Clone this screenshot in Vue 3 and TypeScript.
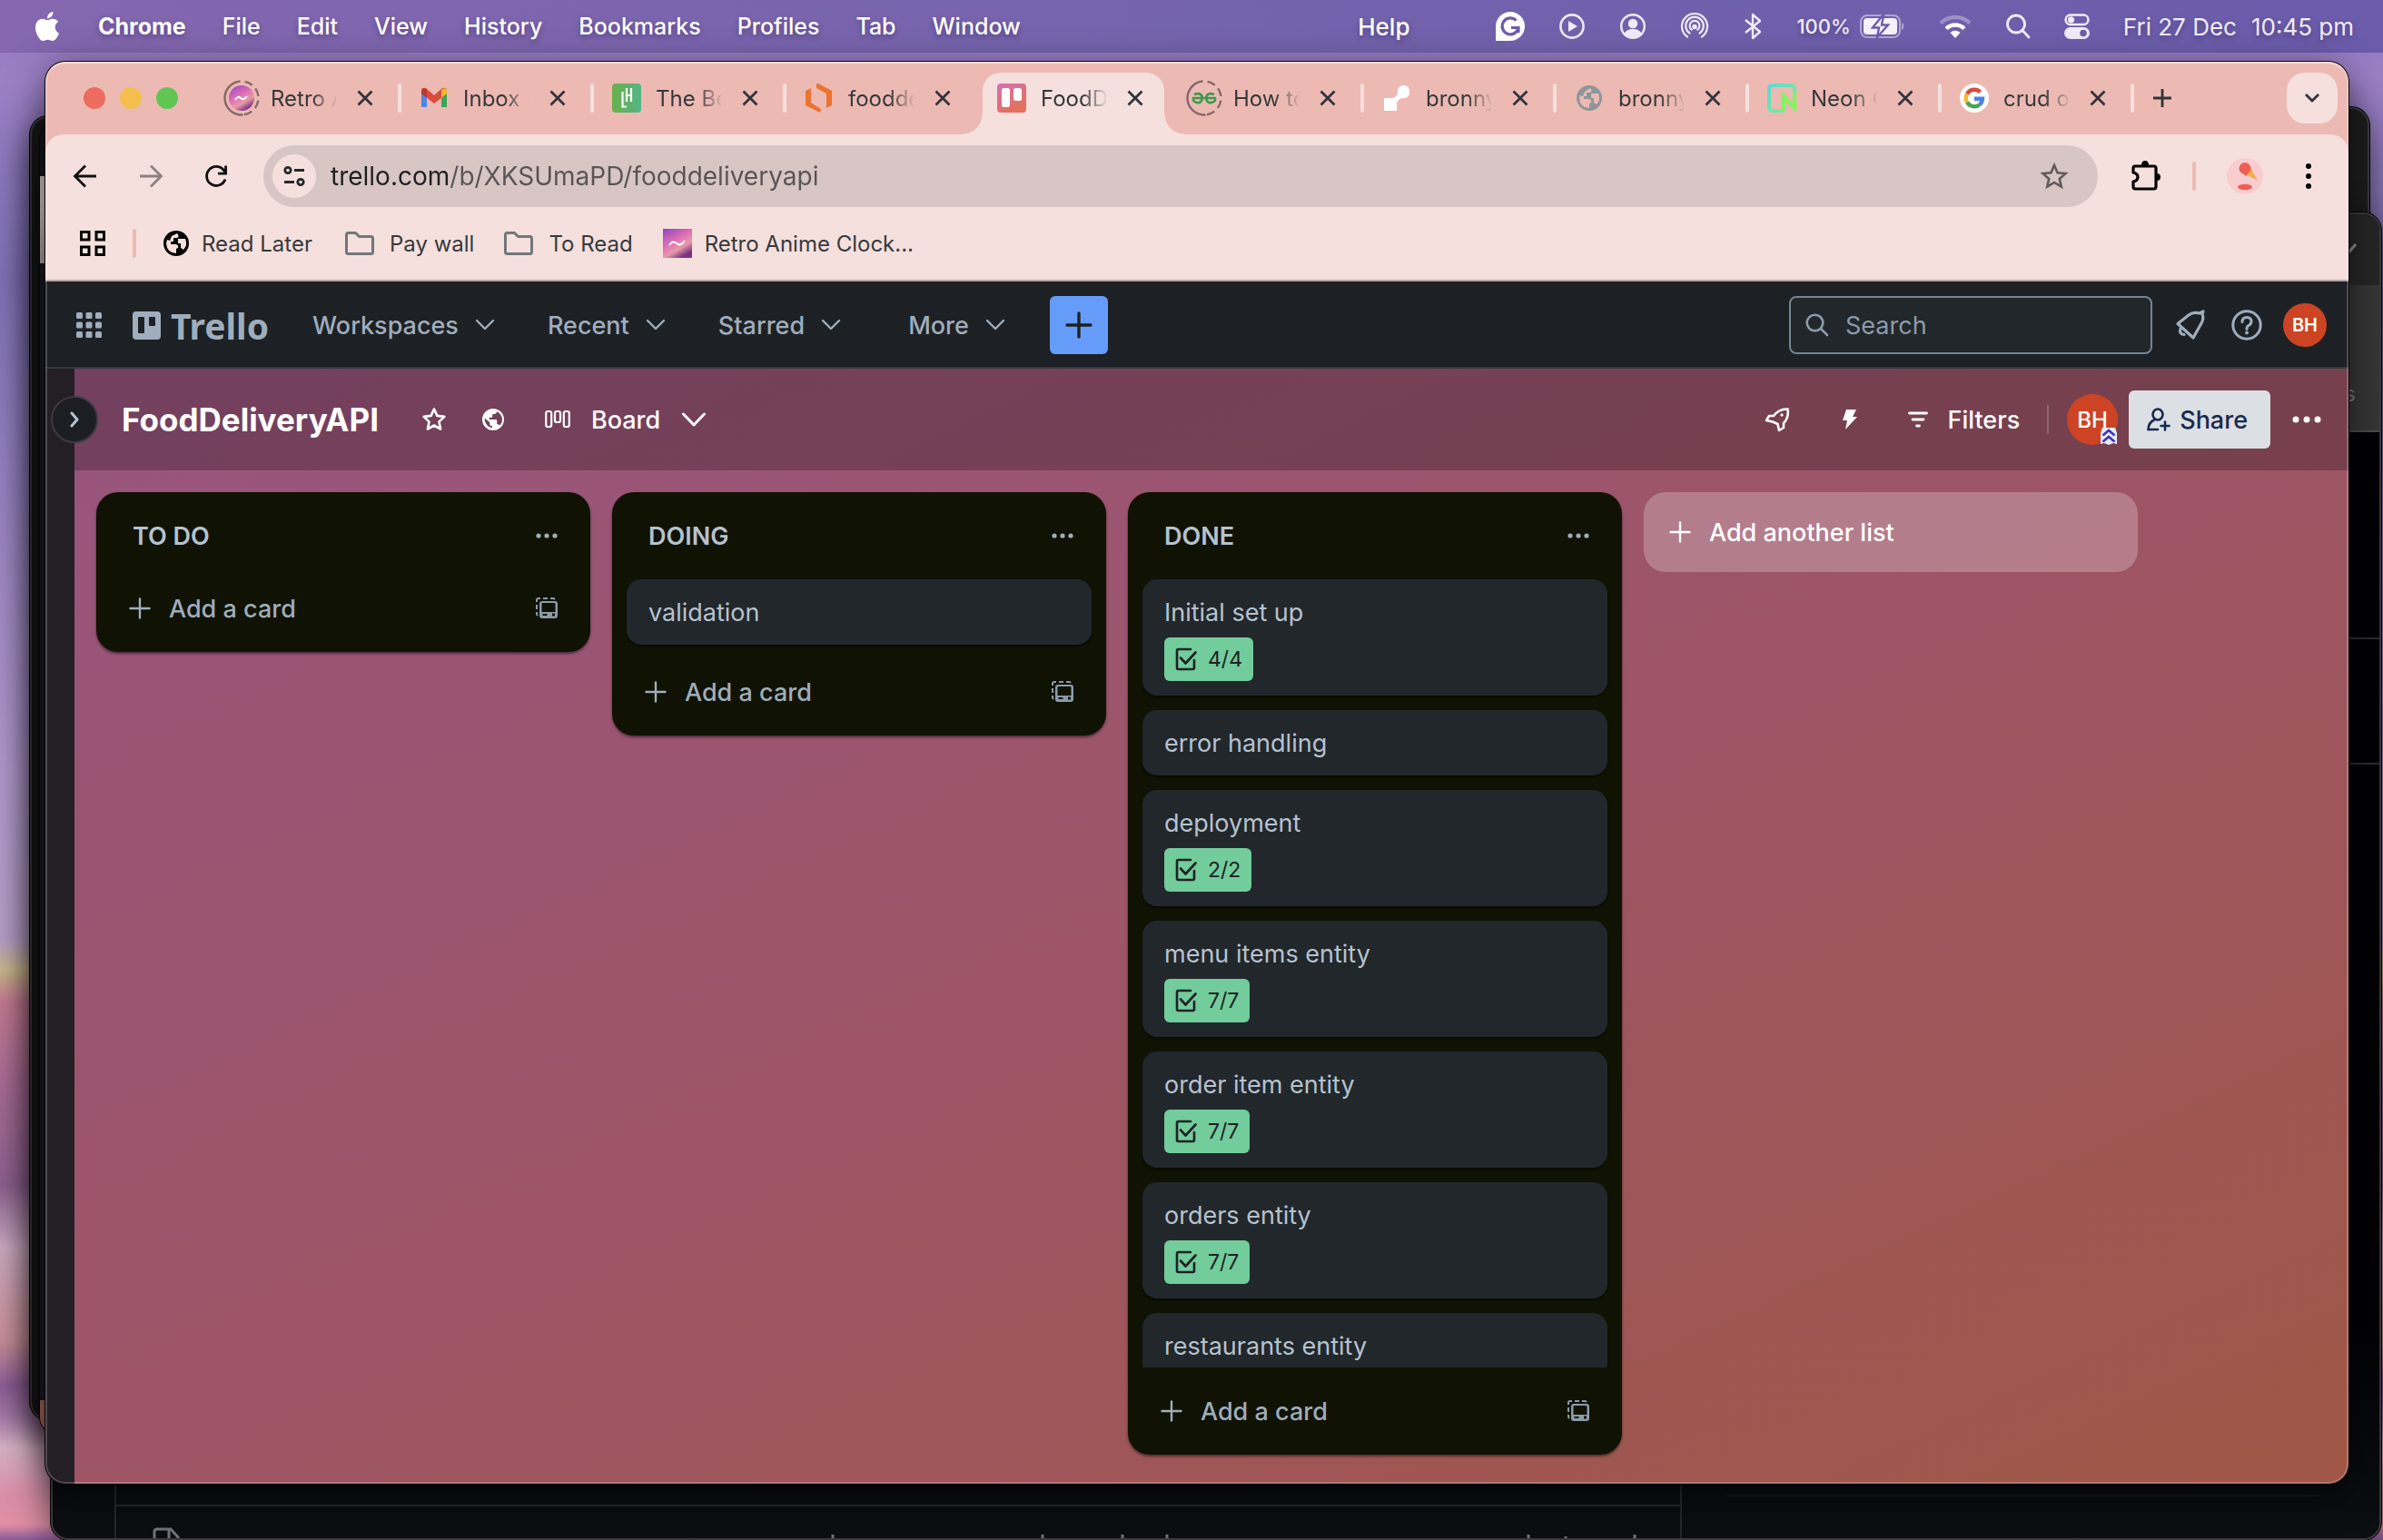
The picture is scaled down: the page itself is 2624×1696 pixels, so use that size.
<script setup lang="ts">
interface BrowserTab {
  title: string
  icon: string
  active?: boolean
  separator: boolean
}
interface Card {
  title: string
  checks?: string
}
interface List {
  name: string
  cards: Card[]
}

const menus: string[] = ['File', 'Edit', 'View', 'History', 'Bookmarks', 'Profiles', 'Tab', 'Window']

const tabs: BrowserTab[] = [
  { title: 'Retro A', icon: 'retro', separator: true },
  { title: 'Inbox (', icon: 'gmail', separator: true },
  { title: 'The Be', icon: 'lh', separator: true },
  { title: 'foodde', icon: 'hex', separator: false },
  { title: 'FoodD', icon: 'trello', active: true, separator: false },
  { title: 'How to', icon: 'geeks', separator: true },
  { title: 'bronny', icon: 'render', separator: true },
  { title: 'bronny', icon: 'globe', separator: true },
  { title: 'Neon C', icon: 'neon', separator: true },
  { title: 'crud o', icon: 'google', separator: true },
]

const navItems: string[] = ['Workspaces', 'Recent', 'Starred', 'More']

const lists: List[] = [
  { name: 'TO DO', cards: [] },
  { name: 'DOING', cards: [{ title: 'validation' }] },
  {
    name: 'DONE',
    cards: [
      { title: 'Initial set up', checks: '4/4' },
      { title: 'error handling' },
      { title: 'deployment', checks: '2/2' },
      { title: 'menu items entity', checks: '7/7' },
      { title: 'order item entity', checks: '7/7' },
      { title: 'orders entity', checks: '7/7' },
      { title: 'restaurants entity' },
    ],
  },
]
</script>

<template>
  <div class="desktop">
    <header class="menubar">
      <nav class="menus">
        <svg class="apple" viewBox="0 0 24 24" fill="#fff" aria-hidden="true">
          <path d="M12.152 6.896c-.948 0-2.415-1.078-3.96-1.04-2.04.027-3.91 1.183-4.961 3.014-2.117 3.675-.546 9.103 1.519 12.09 1.013 1.454 2.208 3.09 3.792 3.039 1.52-.065 2.09-.987 3.935-.987 1.831 0 2.35.987 3.96.948 1.637-.026 2.676-1.48 3.676-2.948 1.156-1.688 1.636-3.325 1.662-3.415-.039-.013-3.182-1.221-3.22-4.857-.026-3.04 2.48-4.494 2.597-4.559-1.429-2.09-3.623-2.324-4.39-2.376-2-.156-3.675 1.09-4.61 1.09zM15.53 3.83c.843-1.012 1.4-2.427 1.245-3.83-1.207.052-2.662.805-3.532 1.818-.78.896-1.454 2.338-1.273 3.714 1.338.104 2.715-.688 3.559-1.701" />
        </svg>
        <strong>Chrome</strong>
        <span v-for="m in menus" :key="m">{{ m }}</span>
      </nav>
      <div class="status">
        <span class="help">Help</span>
        <svg width="32" height="32" viewBox="0 0 32 32">
          <path fill="#fff" d="M16 0a16 16 0 1 1 0 32H0V16A16 16 0 0 1 16 0z" />
          <path fill="none" stroke="#6c5ca8" stroke-width="3.200" d="M22.500 9.500A9 9 0 1 0 25 17.500H17M25 17.500V23" />
        </svg>
        <svg width="30" height="30" viewBox="0 0 30 30">
          <circle cx="15" cy="15" r="12.600" fill="none" stroke="#efebf8" stroke-width="2.600" />
          <path fill="#efebf8" d="M11 9v12l10-6z" />
        </svg>
        <svg width="30" height="30" viewBox="0 0 30 30">
          <circle cx="15" cy="15" r="12.800" fill="none" stroke="#efebf8" stroke-width="2.400" />
          <circle cx="15" cy="12" r="5.200" fill="#efebf8" />
          <path fill="#efebf8" d="M5 24c2-5 6-6 10-6s8 1 10 6c-3 3-6 4.400-10 4.400S8 27 5 24z" />
        </svg>
        <svg width="32" height="32" viewBox="0 0 32 32" fill="none" stroke="#efebf8" stroke-width="2.200" stroke-linecap="round">
          <path d="M8 27.500A14 14 0 1 1 24 27.500M10.500 23.500a9.800 9.800 0 1 1 11 0M12.800 19.600a5.400 5.400 0 1 1 6.400 0" />
          <circle cx="16" cy="16.500" r="1.600" fill="#efebf8" />
        </svg>
        <svg width="22" height="32" viewBox="0 0 22 32" fill="none" stroke="#efebf8" stroke-width="2.400" stroke-linejoin="round">
          <path d="M3 9l16 13-8 7V3l8 7L3 23" />
        </svg>
        <span class="battery">
          100%
          <svg width="50" height="26" viewBox="0 0 50 26">
            <rect x="1" y="1" width="43" height="24" rx="7" fill="none" stroke="#b0a6d3" stroke-width="2" />
            <rect x="4" y="4" width="37" height="18" rx="4" fill="#f4f1fb" />
            <path d="M46 9c3 1 3 7 0 8z" fill="#b0a6d3" />
            <path d="M25 1L14 14.500h7L19 25l12-13.500h-7L26 1z" fill="#f4f1fb" stroke="#6c5dab" stroke-width="2.400" />
          </svg>
        </span>
        <svg width="36" height="26" viewBox="0 0 36 26" fill="none" stroke-width="4.400">
          <path d="M2 9.500a23 23 0 0 1 32 0" stroke="#9b8fc7" />
          <path d="M8 15.500a14.500 14.500 0 0 1 20 0" stroke="#fff" />
          <path d="M18 26l-5.500-6a8 8 0 0 1 11 0z" fill="#fff" />
        </svg>
        <svg width="28" height="28" viewBox="0 0 28 28" fill="none" stroke="#efebf8" stroke-width="2.800" stroke-linecap="round">
          <circle cx="12" cy="11.500" r="9.500" />
          <path d="M19 18.500l7 7.500" />
        </svg>
        <svg width="28" height="28" viewBox="0 0 28 28">
          <rect x="1.500" y="1.500" width="25" height="10.500" rx="5.200" fill="none" stroke="#efebf8" stroke-width="2.400" />
          <circle cx="7.500" cy="6.800" r="3.600" fill="#efebf8" />
          <rect x="0" y="15" width="28" height="13" rx="6.500" fill="#efebf8" />
          <circle cx="21" cy="21.500" r="3.800" fill="#6c5dab" />
        </svg>
        <time class="clock"><span>Fri 27 Dec</span><span>10:45 pm</span></time>
      </div>
    </header>

    <div class="back-windows" aria-hidden="true">
      <div class="bw bw-grey"></div>
      <div class="bw bw-board"></div>
      <div class="bw bw-top"></div>
      <div class="bw bw-main">
        <div class="bw-tabs"><svg width="12" height="18" viewBox="0 0 12 18" fill="none" stroke="#8f8f8f" stroke-width="3"><path d="M0 12l8-9" /></svg></div>
        <div class="bw-bar">s</div>
        <div class="bw-page">
          <div class="bw-doc">
            <svg width="1684" height="12" viewBox="0 0 1684 12" fill="none" stroke="#6e7278" stroke-width="3"><path d="M2 14V5q0-3 3-3h15l9 10M18 2v12" /><path d="M749 8v6M980 8v6M1068 8v6M1117 8v6M1515 8v6M1556 10v4M1632 8v6" /></svg>
          </div>
          <div class="bw-side"></div>
        </div>
      </div>
    </div>

    <main class="window">
      <div class="chrome">
        <div class="tabstrip">
          <div class="lights"><i class="red"></i><i class="yellow"></i><i class="green"></i></div>
          <div class="tabs">
            <div v-for="(t, i) in tabs" :key="i" class="tab" :class="{ active: t.active, sep: t.separator }">
              <span v-if="t.active" class="tab-shape"></span>
              <svg class="favicon" viewBox="0 0 32 32">
                <template v-if="t.icon === 'retro'">
                  <circle cx="16" cy="16" r="18.500" fill="none" stroke="#85686b" stroke-width="2.400" stroke-dasharray="58 5 9 5 9 5 9 5 9 3" transform="rotate(85 16 16)" />
                  <circle cx="16" cy="16" r="14" fill="url(#retro)" />
                  <path d="M9 18q3-5 6-2t7-2" fill="none" stroke="#fff" stroke-width="2" />
                </template>
                <template v-else-if="t.icon === 'gmail'">
                  <path d="M2 8v18h6V13z" fill="#4c86ee" /><path d="M24 13v13h6V8z" fill="#3ba65a" />
                  <path d="M2 8q0-4 5-3l9 8 9-8q5-1 5 3v3L16 22 2 11z" fill="#dc4a3c" />
                  <path d="M24 7q5-4 6 1v3l-6 5z" fill="#f3b92b" /><path d="M2 8q1-5 6-1v9l-6-5z" fill="#b93a2e" />
                </template>
                <template v-else-if="t.icon === 'lh'">
                  <rect width="32" height="32" rx="4" fill="url(#lh)" />
                  <path d="M11.500 9v16.500H16M16 5v15M21 5v15M16 13h5" fill="none" stroke="#fff" stroke-width="2.200" />
                </template>
                <template v-else-if="t.icon === 'hex'">
                  <path d="M1 8l6-3v16l11 7-1 4L1 24zM13 0l2 0 15 8v16l-6 3V11l-11-6z" fill="#ec722e" />
                </template>
                <template v-else-if="t.icon === 'trello'">
                  <rect width="32" height="32" rx="4" fill="url(#trelloFav)" />
                  <rect x="5" y="5" width="9" height="21" rx="2.500" fill="#fff" /><rect x="18" y="5" width="9" height="14" rx="2.500" fill="#fff" />
                </template>
                <template v-else-if="t.icon === 'geeks'">
                  <circle cx="16" cy="16" r="18.500" fill="none" stroke="#85686b" stroke-width="2.400" stroke-dasharray="58 5 9 5 9 5 9 5 9 3" transform="rotate(85 16 16)" />
                  <path d="M5 12q8-3 9 4-1 6-6 5t-4-5h24q1 4-4 5t-6-5q1-7 9-4" fill="none" stroke="#3f9a4d" stroke-width="2.600" />
                </template>
                <template v-else-if="t.icon === 'render'">
                  <path d="M2 16h8q7 0 7-7t7-7q6 0 6 7t-6 7q-8 0-8 8v6H2z" fill="#fff" />
                </template>
                <template v-else-if="t.icon === 'globe'">
                  <circle cx="16" cy="16" r="14" fill="#8d979b" />
                  <path d="M17 5q3 3 0 5h-4v4h-3v3h6q3 1 2 4l-2 1v5Q6 27 5 16l1-3 3 1 2-5zM26 11q3 7-2 12l-3-2v-5h-3v-5z" fill="#edbab3" />
                </template>
                <template v-else-if="t.icon === 'neon'">
                  <path d="M18 30H6q-4 0-4-4V6q0-4 4-4h20q4 0 4 4v20" fill="none" stroke="url(#neon)" stroke-width="4" />
                  <path d="M18 30V14l12 13V10" fill="none" stroke="#84f262" stroke-width="4.500" />
                </template>
                <template v-else>
                  <circle cx="16" cy="16" r="16" fill="#fff" />
                  <g fill="none" stroke-width="4.400">
                    <path d="M22.600 9.400A9.300 9.300 0 0 0 8 11.300" stroke="#dd4b3e" /><path d="M8 11.300a9.300 9.300 0 0 0 0 9.400" stroke="#f2b92f" />
                    <path d="M8 20.700a9.300 9.300 0 0 0 14 2.400" stroke="#4aa457" /><path d="M22 23.100a9.300 9.300 0 0 0 3-6.400h-9" stroke="#4c82ea" />
                  </g>
                </template>
              </svg>
              <span class="tab-title">{{ t.title }}</span>
              <button class="icon-btn" :aria-label="'Close ' + t.title">
                <svg width="24" height="24" viewBox="0 0 24 24" fill="none" stroke="#30343a" stroke-width="2.800"><path d="M4.500 4.500l15 15M19.500 4.500l-15 15" /></svg>
              </button>
            </div>
          </div>
          <button class="icon-btn newtab" aria-label="New tab">
            <svg width="24" height="24" viewBox="0 0 24 24" fill="none" stroke="#30343a" stroke-width="2.800"><path d="M12 2v20M2 12h20" /></svg>
          </button>
          <button class="icon-btn tabsearch" aria-label="Search tabs">
            <svg width="20" height="14" viewBox="0 0 20 14" fill="none" stroke="#30343a" stroke-width="2.800"><path d="M3 3l7 7 7-7" /></svg>
          </button>
        </div>

        <div class="toolbar">
          <div class="address-row">
            <div class="nav-btns">
              <button class="icon-btn" aria-label="Back"><svg width="32" height="32" viewBox="0 0 32 32" fill="none" stroke="#111" stroke-width="2.800"><path d="M28 16H5M16 4.500L4.500 16 16 27.500" /></svg></button>
              <button class="icon-btn" aria-label="Forward"><svg width="32" height="32" viewBox="0 0 32 32" fill="none" stroke="#8d8180" stroke-width="2.800"><path d="M4 16h23M16 4.500L27.500 16 16 27.500" /></svg></button>
              <button class="icon-btn" aria-label="Reload"><svg width="32" height="32" viewBox="0 0 32 32" fill="none" stroke="#111" stroke-width="2.800"><path d="M26 19.500A10.500 10.500 0 1 1 24 9l2.500 3.500M26.600 4.500v8.700H18" /></svg></button>
            </div>
            <div class="omnibox">
              <button class="icon-btn site-info" aria-label="Site information">
                <svg width="28" height="28" viewBox="0 0 28 28" fill="none" stroke="#26292c" stroke-width="2.800"><circle cx="7" cy="7.500" r="3.200" /><path d="M14 7.500h11M3 20.500h11" /><circle cx="21" cy="20.500" r="3.200" /></svg>
              </button>
              <input class="url" type="text" value="trello.com/b/XKSUmaPD/fooddeliveryapi" aria-label="Address" />
              <button class="icon-btn" aria-label="Bookmark this page">
                <svg width="32" height="32" viewBox="0 0 32 32" fill="none" stroke="#5f5a5b" stroke-width="2.600"><path d="M16 4l3.600 8.200 8.900.8-6.700 5.900 2 8.700-7.800-4.600-7.800 4.600 2-8.700L3.500 13l8.900-.8z" /></svg>
              </button>
            </div>
            <div class="ext">
              <button class="icon-btn" aria-label="Extensions">
                <svg width="34" height="36" viewBox="0 0 34 36" fill="none" stroke="#000" stroke-width="3.200" stroke-linejoin="round"><path d="M4 7h22q2 0 2 2v20q0 3-2 3H5q-2 0-2-3v-5q5-1 5-5t-5-5V9q0-2 2-2z" /><path d="M12 6q0-5 4-5t4 5zM29 15q4 0 4 4t-4 4z" fill="#000" stroke="none" /></svg>
              </button>
              <i class="vsep"></i>
              <button class="icon-btn" aria-label="Profile">
                <svg width="40" height="40" viewBox="0 0 40 40"><circle cx="20" cy="20" r="20" fill="#f8cdd0" /><path d="M26 10l8 15-13-7z" fill="#f2ad4e" /><ellipse cx="20" cy="11.500" rx="6.500" ry="6.500" fill="#ef5f55" /><path d="M14 13l7 7 4-6z" fill="#ef5f55" /><ellipse cx="20" cy="32" rx="8" ry="3.200" fill="#ef5f55" /></svg>
              </button>
              <button class="icon-btn" aria-label="Menu"><svg width="32" height="32" viewBox="0 0 32 32"><circle cx="16" cy="5" r="3" /><circle cx="16" cy="16" r="3" /><circle cx="16" cy="27" r="3" /></svg></button>
            </div>
          </div>
          <div class="bookmarks">
            <svg class="apps" width="28" height="28" viewBox="0 0 28 28" fill="none" stroke="#000" stroke-width="3"><path d="M1.500 1.500h8.500v8.500H1.500zM18 1.500h8.500v8.500H18zM1.500 18h8.500v8.500H1.500zM18 18h8.500v8.500H18z" /></svg>
            <i class="vsep"></i>
            <a href="#" class="bookmark">
              <svg width="28" height="28" viewBox="0 0 28 28"><circle cx="14" cy="14" r="14" /><path d="M15 3q3 3 0 5h-4v4H8v3h6q3 1 2 4l-2 1v5Q4 25 3 14l1-4 3 1 2-5zM24 9q3 7-2 12l-3-2v-5h-3V9z" fill="#f5e0dd" /></svg>
              Read Later
            </a>
            <a v-for="f in ['Pay wall', 'To Read']" :key="f" href="#" class="bookmark folder">
              <svg width="32" height="26" viewBox="0 0 32 26" fill="none" stroke="#71777b" stroke-width="3" stroke-linejoin="round"><path d="M1.500 3.500q0-2 2-2h8l4 4h13q2 0 2 2v15q0 2-2 2h-25q-2 0-2-2z" /></svg>
              {{ f }}
            </a>
            <a href="#" class="bookmark">
              <svg width="32" height="32" viewBox="0 0 32 32"><rect width="32" height="32" fill="url(#retro)" /><path d="M7 18q4-6 8-2t9-3" fill="none" stroke="#fff" stroke-width="2" /></svg>
              Retro Anime Clock...
            </a>
          </div>
        </div>
      </div>

      <header class="trello-nav">
        <button class="icon-btn" aria-label="Atlassian apps">
          <svg width="28" height="28" viewBox="0 0 28 28" fill="#9fadbc"><template v-for="r in 3" :key="r"><rect v-for="c in 3" :key="c" :x="(c - 1) * 10.500" :y="(r - 1) * 10.500" width="7" height="7" rx="1.500" /></template></svg>
        </button>
        <a href="#" class="logo">
          <svg width="31" height="31" viewBox="0 0 31 31"><path fill="#9fadbc" fill-rule="evenodd" d="M4 0h23q4 0 4 4v23q0 4-4 4H4q-4 0-4-4V4q0-4 4-4zM7 6q-1 0-1 1v16q0 1 1 1h5q1 0 1-1V7q0-1-1-1zM19 6q-1 0-1 1v8q0 1 1 1h5q1 0 1-1V7q0-1-1-1z" /></svg>
          Trello
        </a>
        <nav class="trello-menus">
          <button v-for="n in navItems" :key="n" class="menu-btn">
            {{ n }}
            <svg width="22" height="14" viewBox="0 0 22 14" fill="none" stroke="#9fadbc" stroke-width="2.400" stroke-linecap="round" stroke-linejoin="round"><path d="M2 2l9 9 9-9" /></svg>
          </button>
        </nav>
        <button class="create" aria-label="Create">
          <svg width="30" height="30" viewBox="0 0 30 30" fill="none" stroke="#1d2125" stroke-width="3.400" stroke-linecap="round"><path d="M15 2v26M2 15h26" /></svg>
        </button>
        <label class="search">
          <svg width="26" height="26" viewBox="0 0 26 26" fill="none" stroke="#8c9bab" stroke-width="2.600" stroke-linecap="round"><circle cx="10.500" cy="10.500" r="8.800" /><path d="M17.500 17.500l6.500 6.500" /></svg>
          <input type="search" placeholder="Search" aria-label="Search" />
        </label>
        <button class="icon-btn" aria-label="Notifications">
          <svg width="34" height="34" viewBox="0 0 34 34" fill="none" stroke="#9fadbc" stroke-width="3.200" stroke-linejoin="round" stroke-linecap="round"><path d="M31 2l-1 3q2 5-1 10l-9 16L3 15.500 15 6q5-4 12-2z" /><path d="M6 21q-2 6 4 6.500" /></svg>
        </button>
        <button class="icon-btn" aria-label="Help">
          <svg width="34" height="34" viewBox="0 0 34 34" fill="none" stroke="#9fadbc" stroke-width="3"><circle cx="17" cy="17" r="15.200" /><path d="M12 13.500q0-5 5-5t5 4.500q0 3-3 4.500-2 1-2 4" stroke-linecap="round" /><circle cx="17" cy="25.500" r="1.200" fill="#9fadbc" stroke-width="1.400" /></svg>
        </button>
        <button class="avatar small" aria-label="Account">BH</button>
      </header>

      <div class="workspace">
        <aside class="sidebar">
          <button class="expand" aria-label="Expand sidebar">
            <svg width="12" height="18" viewBox="0 0 12 18" fill="none" stroke="#b6c2cf" stroke-width="3" stroke-linecap="round" stroke-linejoin="round"><path d="M3 2l6 7-6 7" /></svg>
          </button>
        </aside>
        <section class="board">
          <div class="board-header">
            <h1>FoodDeliveryAPI</h1>
            <button class="icon-btn star" aria-label="Star board">
              <svg width="28" height="28" viewBox="0 0 28 28" fill="none" stroke="#fff" stroke-width="2.600" stroke-linejoin="round"><path d="M14 2.500l3.400 7.400 8 1-5.900 5.500 1.600 8.100-7.100-4-7.100 4 1.600-8.100-5.900-5.500 8-1z" /></svg>
            </button>
            <button class="icon-btn world" aria-label="Visibility">
              <svg width="26" height="26" viewBox="0 0 26 26"><path fill="#fff" fill-rule="evenodd" d="M13 1a12 12 0 1 1 0 24 12 12 0 0 1 0-24zM3.800 11.500c-.6 5 3 10 8 10.800v-2.300q-2.600 0-2.600-2.600v-1.300zM17 4.300q-.3 2.700-2.700 2.700h-2v2.500q0 1.200-1.200 1.200H8.800v2.400H16q1.200 0 1.200 1.200V18q2 0 3 1.600A9.300 9.300 0 0 0 17 4.300z" /></svg>
            </button>
            <button class="menu-btn view">
              <svg width="28" height="22" viewBox="0 0 28 22" fill="none" stroke="#fff" stroke-width="2.200"><rect x="1.200" y="2" width="6" height="17" rx="2" /><rect x="11" y="2" width="6" height="12" rx="2" /><rect x="20.800" y="2" width="6" height="17" rx="2" /></svg>
              Board
              <svg width="28" height="18" viewBox="0 0 28 18" fill="none" stroke="#fff" stroke-width="3" stroke-linecap="round" stroke-linejoin="round"><path d="M2.500 3L14 15 25.500 3" /></svg>
            </button>
            <div class="board-tools">
              <button class="icon-btn" aria-label="Power-Ups">
                <svg width="28" height="28" viewBox="0 0 28 28" fill="none" stroke="#fff" stroke-width="2.600" stroke-linejoin="round"><path d="M25.500 2.500Q16 2 10 10H5l-3 5 7 1.500L14.500 19l1.500 7 5-3v-5q6-6 4.500-15.500z" /><circle cx="19" cy="9" r="1.200" fill="#fff" stroke-width="1" /></svg>
              </button>
              <button class="icon-btn" aria-label="Automation">
                <svg width="16" height="24" viewBox="0 0 16 24" fill="#fff"><path d="M4 1h11l-4 8h5L3 23l2-10H0z" /></svg>
              </button>
              <button class="menu-btn filters">
                <svg width="22" height="18" viewBox="0 0 22 18" fill="none" stroke="#fff" stroke-width="2.800" stroke-linecap="round"><path d="M1.500 2h19M5 9h12M9.500 16h3" /></svg>
                Filters
              </button>
              <i class="divider"></i>
              <button class="avatar" aria-label="Member BH">BH
                <svg class="badge" width="20" height="20" viewBox="0 0 20 20"><path d="M3 1h14l2 6v12l-4-1-5 2-5-2-4 1V7z" fill="#e8eafb" /><path d="M3.500 9.500L10 4l6.500 5.500M3.500 16.500L10 11l6.500 5.500" fill="none" stroke="#3b35b5" stroke-width="2.600" /></svg>
              </button>
              <button class="share">
                <svg width="26" height="26" viewBox="0 0 26 26" fill="none" stroke="#172b4d" stroke-width="2.600" stroke-linecap="round"><ellipse cx="12" cy="7.500" rx="5.500" ry="6" /><path d="M8 13.500Q2 16 1.500 24H12M20 15.500v9M15.500 20h9" /></svg>
                Share
              </button>
              <button class="icon-btn" aria-label="Board menu"><svg width="32" height="8" viewBox="0 0 32 8" fill="#fff"><circle cx="4" cy="4" r="3.500" /><circle cx="16" cy="4" r="3.500" /><circle cx="28" cy="4" r="3.500" /></svg></button>
            </div>
          </div>

          <div class="lists">
            <section v-for="l in lists" :key="l.name" class="list">
              <div class="list-head">
                <h2>{{ l.name }}</h2>
                <button class="icon-btn" aria-label="List actions"><svg width="24" height="6" viewBox="0 0 24 6" fill="#9fadbc"><circle cx="3" cy="3" r="2.600" /><circle cx="12" cy="3" r="2.600" /><circle cx="21" cy="3" r="2.600" /></svg></button>
              </div>
              <div v-if="l.cards.length" class="cards">
                <article v-for="c in l.cards" :key="c.title" class="card">
                  <p>{{ c.title }}</p>
                  <span v-if="c.checks" class="checks">
                    <svg width="24" height="26" viewBox="0 0 24 26" fill="none" stroke="#1d2125" stroke-width="2.600" stroke-linecap="round" stroke-linejoin="round"><path d="M17 2H3.500Q2 2 2 3.500v19Q2 24 3.500 24h16q1.500 0 1.500-1.500V14" /><path d="M6 11.500l5.500 6L22.500 5.500" /></svg>
                    {{ c.checks }}
                  </span>
                </article>
              </div>
              <div class="list-foot">
                <button class="add">
                  <svg width="24" height="24" viewBox="0 0 24 24" fill="none" stroke="#9fadbc" stroke-width="2.400" stroke-linecap="round"><path d="M12 1.500v21M1.500 12h21" /></svg>
                  Add a card
                </button>
                <button class="icon-btn" aria-label="Create from template">
                  <svg width="24" height="24" viewBox="0 0 24 24" fill="none" stroke="#8c9bab" stroke-width="2"><path d="M1 5V3q0-2 2-2h2M8 1h5M16 1h3q1 0 2 1M1 8v5M1 16v2q0 1 1 2" /><path fill="#8c9bab" fill-rule="evenodd" stroke="none" d="M7 4h14q3 0 3 3v13q0 3-3 3H7q-3 0-3-3V7q0-3 3-3zM6.500 7v9h15V7q0-1-1-1h-13q-1 0-1 1zM7.500 18v2h5v-2zM18 17.500v3h3v-3z" /></svg>
                </button>
              </div>
            </section>
            <button class="add-list">
              <svg width="24" height="24" viewBox="0 0 24 24" fill="none" stroke="#fff" stroke-width="2.400" stroke-linecap="round"><path d="M12 1.500v21M1.500 12h21" /></svg>
              Add another list
            </button>
          </div>
        </section>
      </div>
    </main>

    <svg class="defs" width="0" height="0" aria-hidden="true">
      <defs>
        <linearGradient id="retro" x1="0" y1="0" x2="0.600" y2="1"><stop offset="0" stop-color="#8a45c4" /><stop offset="0.450" stop-color="#dc6cb4" /><stop offset="0.750" stop-color="#e89aa8" /><stop offset="1" stop-color="#7d3382" /></linearGradient>
        <linearGradient id="lh" x1="0" y1="0" x2="1" y2="0"><stop offset="0" stop-color="#6ab04c" /><stop offset="1" stop-color="#53b586" /></linearGradient>
        <linearGradient id="trelloFav" x1="0" y1="0" x2="0.500" y2="1"><stop offset="0" stop-color="#d272b0" /><stop offset="1" stop-color="#e5705c" /></linearGradient>
        <linearGradient id="neon" x1="0" y1="0" x2="1" y2="1"><stop offset="0" stop-color="#5fd9d4" /><stop offset="1" stop-color="#7df08a" /></linearGradient>
      </defs>
    </svg>
  </div>
</template>

<style>
html,
body,
#app {
  height: 100%;
}
body {
  margin: 0;
  overflow: hidden;
}
</style>

<style scoped>
* {
  box-sizing: border-box;
}
.desktop {
  position: relative;
  height: 100%;
  overflow: hidden;
  font-family: Inter, "Liberation Sans", sans-serif;
  font-size: 27px;
  background: linear-gradient(180deg, #8f74bb 0, #9c80c6 5%, #7f72b6 18%, #9480bf 30%, #b198cc 50%, #b79fc8 61%, #c9b78b 63%, #c37b92 65%, #a96c95 70%, #8d618f 77%, #c9a9c0 81%, #c99098 87%, #8d5f96 90%, #a578a8 92%, #d5b0c3 94%, #d98fa8 97%, #e08fa5 99%, #8a5a9a 100%);
}
button {
  border: 0;
  padding: 0;
  margin: 0;
  background: none;
  font: inherit;
  color: inherit;
}
svg {
  display: block;
  flex: none;
}
a {
  color: inherit;
  text-decoration: none;
}
.icon-btn {
  display: flex;
  align-items: center;
  justify-content: center;
  flex: none;
}
.defs {
  position: absolute;
}

.menubar {
  display: flex;
  align-items: center;
  justify-content: space-between;
  height: 58px;
  padding: 0 32px 0 36px;
  background: linear-gradient(90deg, #8467af, #7363ad 55%, #6b5cab);
  color: #fff;
  font-size: 26px;
  font-weight: 500;
  white-space: nowrap;
}
.menus,
.status {
  display: flex;
  align-items: center;
  gap: 40px;
  text-shadow: 0 3px 6px rgba(30, 10, 70, 0.35);
}
.menus {
  font-size: 25px;
}
.status {
  gap: 37px;
  color: #f1edf9;
  font-weight: 400;
}
.menus strong {
  font-weight: 700;
}
.apple {
  width: 32px;
  height: 32px;
}
.help {
  margin-right: 58px;
  color: #fff;
  font-weight: 500;
}
.battery {
  display: flex;
  align-items: center;
  gap: 10px;
  font-size: 22px;
  font-weight: 500;
}
.clock {
  display: flex;
  gap: 16px;
}

.bw {
  position: absolute;
  border: 2px solid #3b3b3d;
  border-radius: 20px;
  background: #181818;
  box-shadow: 0 0 0 1px #050506, 0 12px 40px rgba(0, 0, 0, 0.55);
}
.bw-grey {
  left: 33px;
  top: 128px;
  width: 400px;
  bottom: 132px;
}
.bw-board {
  left: 44px;
  top: 134px;
  width: 400px;
  bottom: 116px;
  border: 0;
  background: linear-gradient(180deg, #14141c 60px, #c9bcbb 60px 156px, #1c1c26 156px 1408px, #b5705f 1408px);
}
.bw-top {
  right: 15px;
  top: 118px;
  width: 400px;
  height: 400px;
  background: #1d1d1e;
}
.bw-main {
  left: 56px;
  right: 2px;
  top: 234px;
  bottom: 0;
  overflow: hidden;
  display: flex;
  flex-direction: column;
  background: #060709;
}
.bw-tabs {
  height: 78px;
  flex: none;
  display: flex;
  justify-content: flex-end;
  align-items: center;
  padding-right: 22px;
  background: #262626;
}
.bw-bar {
  flex: none;
  height: 162px;
  display: flex;
  justify-content: flex-end;
  align-items: flex-end;
  padding: 0 26px 26px 0;
  font-size: 24px;
  background: #363636;
  border-bottom: 2px solid #4a4a4a;
  color: #777;
}
.bw-page {
  flex: 1;
  display: flex;
  align-items: flex-end;
  padding-left: 68px;
  background: linear-gradient(180deg, transparent 226px, #2a2c31 226px 228px, transparent 228px 364px, #2a2c31 364px 366px, transparent 366px), linear-gradient(180deg, #020204 80%, #0c0e12);
}
.bw-doc {
  width: 1726px;
  height: 100px;
  padding: 88px 0 0 40px;
  border: 2px solid #25272c;
  border-width: 0 2px;
  background: linear-gradient(180deg, transparent 63px, #25272c 63px 65px, transparent 65px);
}
.bw-side {
  flex: 1;
  height: 48px;
  margin: 0 66px 0 50px;
  border-top: 2px solid #17181c;
}

.window {
  position: absolute;
  inset: 68px 38px 62px 50px;
  display: flex;
  flex-direction: column;
  overflow: hidden;
  border-radius: 22px;
  background: #1d2125;
  box-shadow: 0 0 0 1px #08080a, 0 10px 40px rgba(0, 0, 0, 0.6);
}
.window::after {
  content: "";
  position: absolute;
  inset: 0;
  border: 2px solid rgba(255, 255, 255, 0.2);
  border-top-color: rgba(255, 235, 220, 0.7);
  border-radius: 22px;
  pointer-events: none;
}
.chrome {
  flex: none;
  background: #edbab3;
  color: #36393d;
  border-bottom: 2px solid #b9a5a3;
}
.tabstrip {
  display: flex;
  align-items: center;
  height: 80px;
  padding: 0 12px 0 42px;
}
.lights {
  display: flex;
  gap: 16px;
  margin-right: 32px;
}
.lights i {
  width: 24px;
  height: 24px;
  border-radius: 50%;
}
.red { background: #ed6b5f; }
.yellow { background: #f4bf4f; }
.green { background: #61c554; }
.tabs {
  display: flex;
  align-self: stretch;
}
.tab {
  position: relative;
  display: flex;
  align-items: center;
  width: 212px;
  padding-left: 22px;
  font-size: 24px;
}
.tab.sep::after {
  content: "";
  position: absolute;
  right: -2px;
  top: 24px;
  width: 4px;
  height: 32px;
  border-radius: 2px;
  background: #f5e0dd;
}
.tab-shape {
  position: absolute;
  inset: 12px 6px 0;
  border-radius: 20px 20px 0 0;
  background: #f5e0dd;
}
.tab-shape::before,
.tab-shape::after {
  content: "";
  position: absolute;
  bottom: 0;
  width: 22px;
  height: 22px;
}
.tab-shape::before {
  right: 100%;
  background: radial-gradient(circle at 0 0, transparent 21px, #f5e0dd 22px);
}
.tab-shape::after {
  left: 100%;
  background: radial-gradient(circle at 100% 0, transparent 21px, #f5e0dd 22px);
}
.favicon {
  position: relative;
  width: 32px;
  height: 32px;
  overflow: visible;
}
.tab-title {
  position: relative;
  width: 72px;
  margin: 0 20px 0 16px;
  overflow: hidden;
  white-space: nowrap;
  mask-image: linear-gradient(90deg, #000 45px, transparent 74px);
}
.tab .icon-btn {
  position: relative;
}
.newtab {
  margin-left: 21px;
}
.tabsearch {
  width: 56px;
  height: 56px;
  margin-left: auto;
  border-radius: 20px;
  background: #f5e0dd;
}
.toolbar {
  border-radius: 20px 20px 0 0;
  background: #f5e0dd;
}
.address-row {
  display: flex;
  align-items: center;
  gap: 36px;
  padding: 12px 28px 0;
}
.nav-btns {
  display: flex;
  gap: 40px;
}
.omnibox {
  flex: 1;
  display: flex;
  align-items: center;
  gap: 16px;
  height: 68px;
  padding: 0 32px 0 10px;
  border-radius: 34px;
  background: #d8c6c4;
}
.site-info {
  width: 48px;
  height: 48px;
  border-radius: 50%;
  background: #f5e0dd;
}
.url {
  flex: 1;
  border: 0;
  padding: 0;
  font: inherit;
  font-size: 28px;
  outline: 0;
  -webkit-text-fill-color: transparent;
  background: linear-gradient(90deg, #1f1f21 132px, #595455 132px);
  background-clip: text;
  -webkit-background-clip: text;
}
.ext {
  display: flex;
  align-items: center;
  gap: 34px;
}
.vsep {
  width: 4px;
  height: 32px;
  border-radius: 2px;
  background: #edbab3;
}
.bookmarks {
  display: flex;
  align-items: center;
  height: 80px;
  padding-left: 38px;
  font-size: 24px;
}
.bookmarks .vsep {
  margin: 0 30px;
}
.bookmark {
  display: flex;
  align-items: center;
  gap: 14px;
  margin-right: 36px;
}
.bookmark.folder {
  gap: 17px;
  margin-right: 33px;
}

.trello-nav {
  display: flex;
  align-items: center;
  flex: none;
  height: 96px;
  padding: 2px 24px 0 34px;
  border-bottom: 2px solid #333b41;
  background: #1d2125;
  color: #9fadbc;
  font-weight: 500;
}
.logo {
  display: flex;
  align-items: center;
  gap: 11px;
  margin: 0 48px 0 34px;
  font-family: "Noto Sans", sans-serif;
  font-size: 39px;
  font-weight: 700;
}
.trello-menus {
  display: flex;
  gap: 58px;
}
.menu-btn {
  display: flex;
  align-items: center;
  gap: 18px;
  font-weight: 500;
}
.trello-menus .menu-btn:last-child {
  margin-left: 16px;
}
.create {
  display: flex;
  align-items: center;
  justify-content: center;
  width: 64px;
  height: 64px;
  margin: 0 auto 0 49px;
  border-radius: 6px;
  background: #669cf9;
}
.search {
  display: flex;
  align-items: center;
  gap: 18px;
  width: 400px;
  height: 64px;
  padding: 0 16px;
  border: 2px solid #738496;
  border-radius: 8px;
  background: #22272b;
}
.search input {
  flex: 1;
  min-width: 0;
  padding: 0;
  border: 0;
  outline: 0;
  background: none;
  font: inherit;
  font-weight: 400;
  color: #9fadbc;
}
.search input::placeholder {
  color: #8c9bab;
}
.trello-nav .search ~ .icon-btn {
  margin-left: 25px;
}
.trello-nav .search ~ .icon-btn + .icon-btn {
  margin-left: 28px;
}
.trello-nav .avatar {
  margin-left: 23px;
}
.avatar {
  position: relative;
  width: 56px;
  height: 56px;
  flex: none;
  border-radius: 50%;
  background: #cd4424;
  color: #fff;
  font-size: 24px;
  font-weight: 500;
  text-align: center;
}
.avatar.small {
  width: 48px;
  height: 48px;
  font-size: 20px;
  font-weight: 600;
}
.badge {
  position: absolute;
  right: 0;
  bottom: 0;
}

.workspace {
  flex: 1;
  min-height: 0;
  display: flex;
}
.sidebar {
  position: relative;
  flex: none;
  width: 32px;
  background: #241f25;
}
.expand {
  position: absolute;
  z-index: 1;
  left: 6px;
  top: 30px;
  width: 52px;
  height: 52px;
  display: flex;
  align-items: center;
  justify-content: center;
  border: 2px solid #3b3a40;
  border-radius: 50%;
  background: #1c1e23;
}
.board {
  flex: 1;
  min-width: 0;
  display: flex;
  flex-direction: column;
  background: linear-gradient(155deg, #98557e, #9d5566 50%, #a05746);
}
.board-header {
  flex: none;
  display: flex;
  align-items: center;
  height: 112px;
  padding: 0 30px 0 52px;
  background: rgba(0, 0, 0, 0.24);
  color: #fff;
}
h1,
h2,
p {
  margin: 0;
}
h1 {
  font-size: 35px;
  font-weight: 700;
}
.star {
  margin-left: 47px;
}
.world {
  margin: 0 44px 0 38px;
}
.view {
  gap: 23px;
}
.board-tools {
  display: flex;
  align-items: center;
  margin-left: auto;
}
.board-tools > .icon-btn + .icon-btn {
  margin-left: 58px;
}
.filters {
  gap: 22px;
  margin: 0 30px 0 56px;
}
.divider {
  width: 2px;
  height: 32px;
  margin-right: 20px;
  background: rgba(255, 255, 255, 0.2);
}
.share {
  display: flex;
  align-items: center;
  gap: 10px;
  height: 64px;
  margin: 0 24px 0 12px;
  padding: 0 25px 0 20px;
  border-radius: 6px;
  background: #dcdfe4;
  color: #172b4d;
  font-weight: 500;
}

.lists {
  flex: 1;
  min-height: 0;
  display: flex;
  align-items: flex-start;
  gap: 24px;
  padding: 24px 24px 32px;
}
.list {
  flex: none;
  display: flex;
  flex-direction: column;
  width: 544px;
  max-height: 100%;
  border-radius: 24px;
  background: #101204;
  box-shadow: 0 2px 3px rgba(0, 0, 0, 0.5);
  color: #b6c2cf;
}
.list-head {
  flex: none;
  display: flex;
  align-items: center;
  justify-content: space-between;
  height: 80px;
  padding: 16px 36px 0 40px;
}
h2 {
  font-size: 27px;
  font-weight: 600;
}
.cards {
  flex: 0 1 auto;
  min-height: 0;
  display: flex;
  flex-direction: column;
  gap: 16px;
  margin-top: 16px;
  padding: 0 16px 4px;
  overflow: hidden;
}
.card {
  flex: none;
  padding: 16px 24px;
  border-radius: 16px;
  background: #22272b;
  box-shadow: 0 2px 2px rgba(0, 0, 0, 0.5);
}
.card p {
  padding-top: 2px;
  line-height: 38px;
}
.checks {
  display: flex;
  align-items: center;
  gap: 12px;
  width: max-content;
  height: 48px;
  margin-top: 8px;
  padding: 0 12px;
  border-radius: 6px;
  background: #72cc9b;
  color: #1d2125;
  font-size: 23px;
}
.list-foot {
  flex: none;
  display: flex;
  align-items: center;
  justify-content: space-between;
  height: 96px;
  padding: 0 36px;
  color: #9fadbc;
}
.add {
  display: flex;
  align-items: center;
  gap: 20px;
  font-weight: 500;
}
.add-list {
  flex: none;
  display: flex;
  align-items: center;
  gap: 20px;
  width: 544px;
  height: 88px;
  padding: 0 28px;
  border-radius: 24px;
  background: rgba(255, 255, 255, 0.24);
  color: #fff;
  font-weight: 500;
}
</style>
